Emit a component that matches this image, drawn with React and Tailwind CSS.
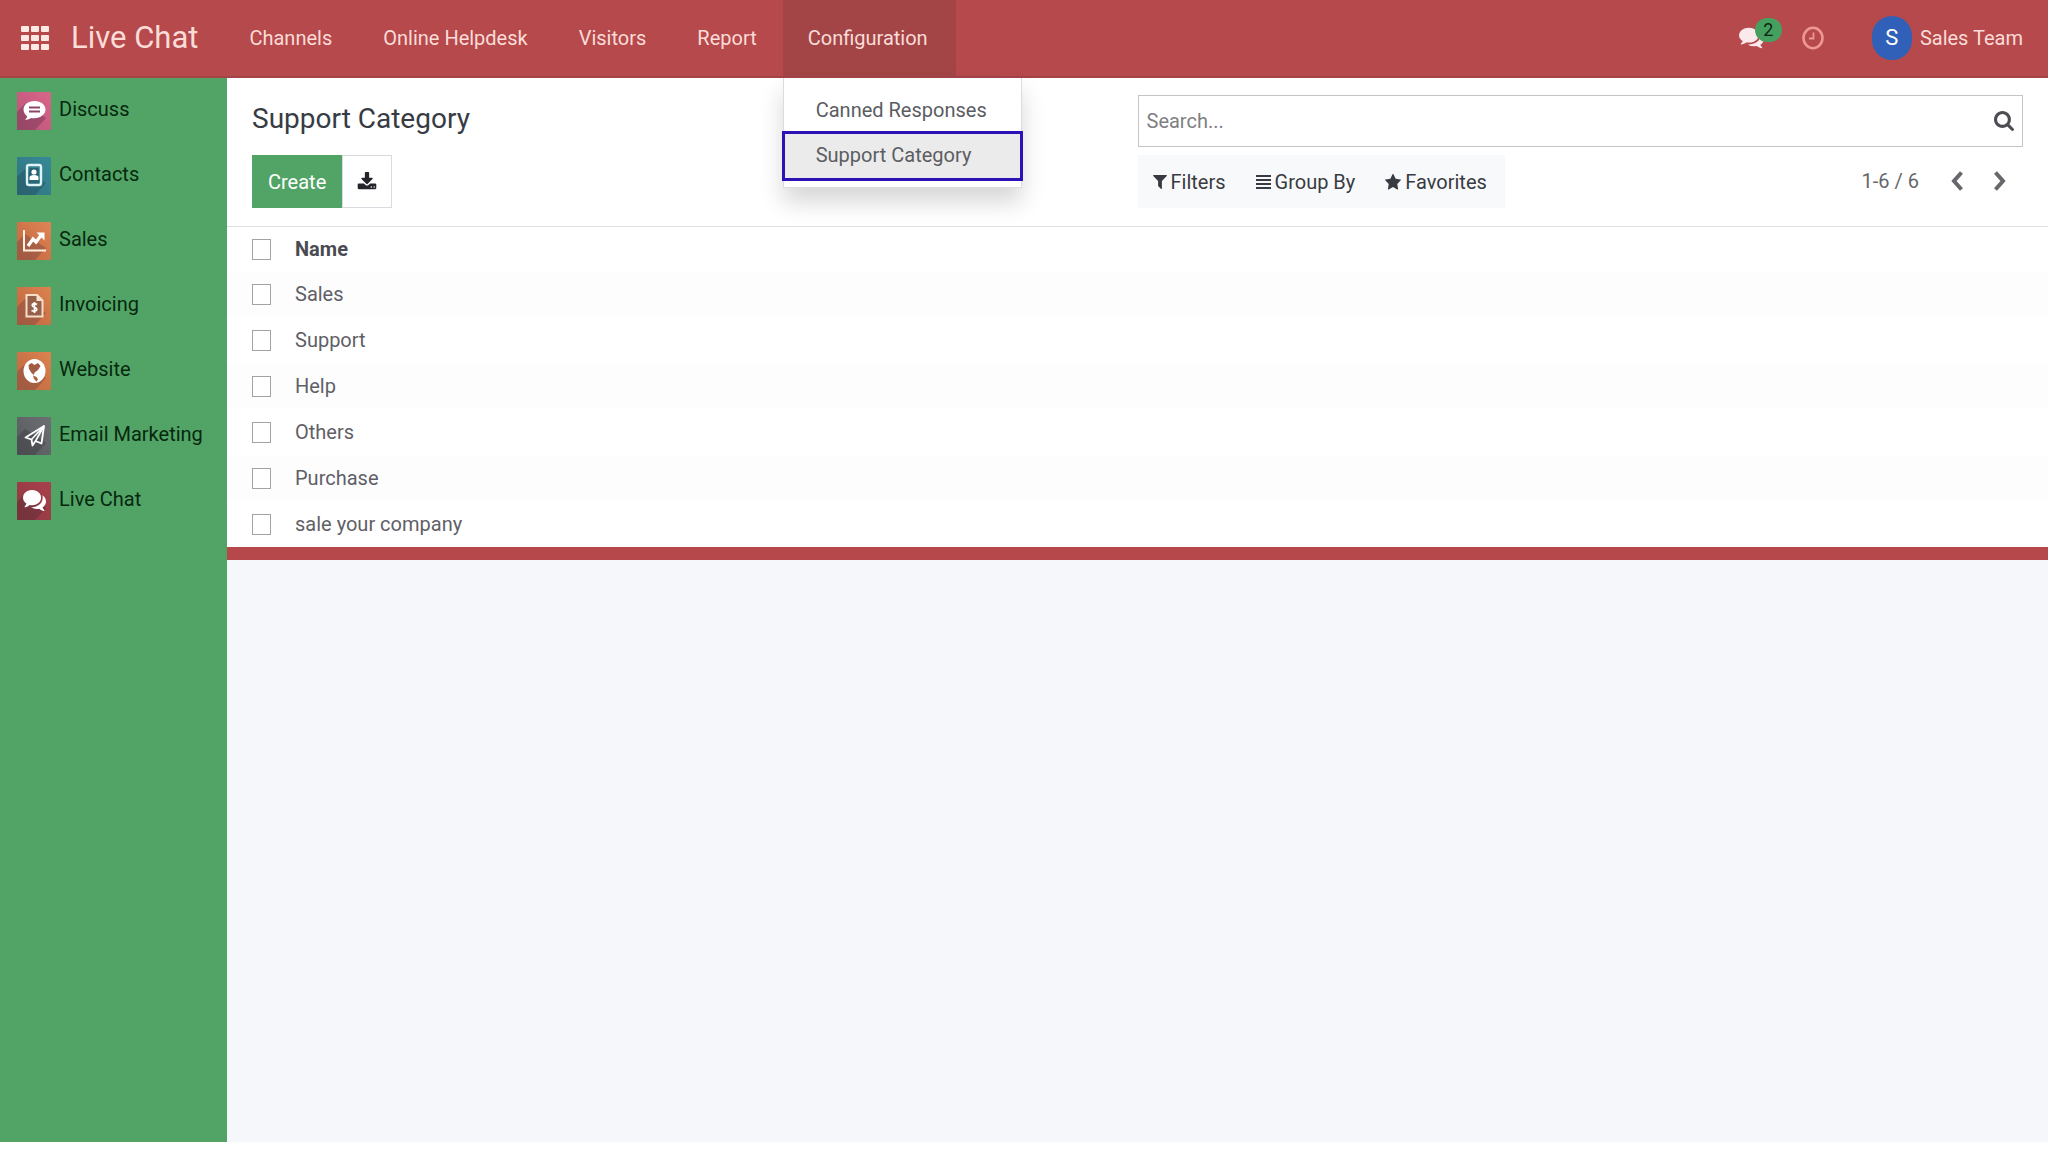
const PATHS = {
  download:
    "M1344 1344q0-26-19-45t-45-19-45 19-19 45 19 45 45 19 45-19 19-45zm256 0q0-26-19-45t-45-19-45 19-19 45 19 45 45 19 45-19 19-45zm128-224v320q0 40-28 68t-68 28h-1472q-40 0-68-28t-28-68v-320q0-40 28-68t68-28h465l135 136q58 56 136 56t136-56l136-136h464q40 0 68 28t28 68zm-325-569q17 41-14 70l-448 448q-18 19-45 19t-45-19l-448-448q-31-29-14-70 17-39 59-39h256v-448q0-26 19-45t45-19h256q26 0 45 19t19 45v448h256q42 0 59 39z",
  search:
    "M1216 832q0-185-131.5-316.5t-316.5-131.5-316.5 131.5-131.5 316.5 131.5 316.5 316.5 131.5 316.5-131.5 131.5-316.5zm512 832q0 52-38 90t-90 38q-54 0-90-38l-343-342q-179 124-399 124-143 0-273.5-55.5t-225-150-150-225-55.5-273.5 55.5-273.5 150-225 225-150 273.5-55.5 273.5 55.5 225 150 150 225 55.5 273.5q0 220-124 399l343 343q37 37 37 90z",
  filter:
    "M1595 295q17 41-14 70l-493 493v742q0 42-39 59-13 5-25 5-27 0-45-19l-256-256q-19-19-19-45v-486l-493-493q-31-29-14-70 17-39 59-39h1280q42 0 59 39z",
  star: "M1728 647q0 22-26 48l-363 354 86 500q1 7 1 20 0 21-10.5 35.5t-30.5 14.5q-19 0-40-12l-449-236-449 236q-22 12-40 12-21 0-31.5-14.5t-10.5-35.5q0-6 2-20l86-500-364-354q-25-27-25-48 0-37 56-46l502-73 225-455q19-41 49-41t49 41l225 455 502 73q56 9 56 46z",
  comments:
    "M1408 768q0 139-94 257t-256.5 186.5-353.5 68.5q-86 0-176-16-124 88-278 128-36 9-86 16h-3q-11 0-20.5-8t-11.5-21q-1-3-1-6.5t.5-6.5 2-6l2.5-5 3.5-5.5 4-5 4.5-5 4-4.5q5-6 23-25t26-29.5 22.5-29 25-38.5 20.5-44q-124-72-195-177t-71-224q0-139 94-257t256.5-186.5 353.5-68.5 353.5 68.5 256.5 186.5 94 257zm384 256q0 120-71 224.5t-195 176.5q10 24 20.5 44t25 38.5 22.5 29 26 29.5 23 25q1 1 4 4.5t4.5 5 4 5 3.5 5.5l2.5 5 2 6 .5 6.5-1 6.5q-3 14-13 22t-22 7q-50-7-86-16-154-40-278-128-90 16-176 16-271 0-472-132 58 4 88 4 161 0 309-45t264-129q125-92 192-212t67-254q0-77-23-152 129 71 204 178t75 230z",
};

function Glyph({ name, box = "0 0 1792 1792", className }) {
  return (
    <svg viewBox={box} preserveAspectRatio="none" fill="currentColor" className={className} aria-hidden="true">
      <path d={PATHS[name]} />
    </svg>
  );
}

function AppsGrid() {
  return (
    <svg viewBox="0 0 28 24" className="h-6 w-7" fill="currentColor" aria-hidden="true">
      {[0, 10, 20].map((x) =>
        [0, 9, 18].map((y) => <rect key={`${x}-${y}`} x={x} y={y} width="8" height="6" rx="1" />)
      )}
    </svg>
  );
}

function Chevron({ right }) {
  return (
    <svg viewBox="0 0 14 20" className="h-5 w-3.5" fill="none" stroke="currentColor" strokeWidth="4" aria-hidden="true">
      <path d={right ? "M2.5 1.5L10 10L2.5 18.5" : "M11.500 1.5L4 10L11.500 18.5"} />
    </svg>
  );
}

function Tile({ from, to, shade, children }) {
  return (
    <svg viewBox="0 0 34 38" className="h-[38px] w-[34px] shrink-0" aria-hidden="true">
      <defs>
        <linearGradient id={`tile-${from}`} x1="0" y1="1" x2="1" y2="0">
          <stop offset="0" stopColor={`#${from}`} />
          <stop offset="1" stopColor={`#${to}`} />
        </linearGradient>
      </defs>
      <rect width="34" height="38" rx="1" fill={`url(#tile-${from})`} />
      <path d="M8 12L0 20V38H18L29 26Z" fill={shade} opacity="0.55" />
      {children}
    </svg>
  );
}

const APPS = [
  {
    label: "Discuss",
    icon: (
      <Tile from="b85478" to="d9668a" shade="#7d3d5a">
        <path
          d="M17.500 9C11 9 6.500 12.600 6.500 17.600C6.500 20.500 8 22.800 10.200 24.200C10 25.800 9 27 7.800 27.800C10.500 27.800 12.700 26.900 14.200 25.900C22 27.200 28.500 23.200 28.500 17.600C28.500 12.600 24 9 17.500 9Z"
          fill="#fff"
        />
        <path d="M12 15.500H23M12 19.500H23" stroke="#8d4766" strokeWidth="1.800" />
      </Tile>
    ),
  },
  {
    label: "Contacts",
    icon: (
      <Tile from="31717f" to="358a98" shade="#225866">
        <rect x="10" y="8" width="14" height="20" rx="2" fill="none" stroke="#dff3f6" strokeWidth="2.400" />
        <rect x="12.500" y="11" width="9" height="12" fill="#265f70" />
        <circle cx="17" cy="15" r="2.600" fill="#fff" />
        <path d="M12.500 23V20.500Q12.500 18 17 18Q21.500 18 21.500 20.500V23Z" fill="#fff" />
      </Tile>
    ),
  },
  {
    label: "Sales",
    icon: (
      <Tile from="c0643f" to="df8556" shade="#8b5044">
        <path d="M7 8V28.500H29" fill="none" stroke="#fff0dc" strokeWidth="2" />
        <path d="M11 24L16 17L19 20L24 13.500" fill="none" stroke="#fff" strokeWidth="3.200" />
        <path d="M19.500 10.500H27.500V18.500Z" fill="#fff" />
      </Tile>
    ),
  },
  {
    label: "Invoicing",
    icon: (
      <Tile from="bd643e" to="dc8350" shade="#8b5044">
        <path d="M9.500 8H20L25.500 13.500V29.500H9.500Z" fill="#96604a" stroke="#f7ddc6" strokeWidth="2" />
        <path d="M19.500 7V14H26.500Z" fill="#f7ddc6" />
        <path
          d="M20 17.500Q17.500 15.800 15.500 17.300Q14.500 19.300 17.500 20.200Q20.500 21.300 19.500 23.300Q17.500 25 14.500 23.500M17.500 15V26"
          fill="none"
          stroke="#fff"
          strokeWidth="1.700"
        />
      </Tile>
    ),
  },
  {
    label: "Website",
    icon: (
      <Tile from="bd653e" to="dc8350" shade="#8b5044">
        <ellipse cx="17.500" cy="19" rx="11" ry="12" fill="#fff" />
        <path
          d="M11.500 13L14.500 11L17.500 13L21 11L23.500 14L21 18L17.500 20.500L17 23L14.500 21L12 17Z"
          fill="#a15c42"
        />
        <path d="M16 23.500L19.500 25L21 27.500L19.500 29.500L17 27Z" fill="#b0603f" />
      </Tile>
    ),
  },
  {
    label: "Email Marketing",
    icon: (
      <Tile from="56585c" to="6c7073" shade="#434449">
        <path
          d="M8.500 20.500L27 9L24.500 26.500L18.500 24L15.500 28.500L14.500 22.500Z"
          fill="none"
          stroke="#fff"
          strokeWidth="1.800"
          strokeLinejoin="round"
        />
        <path d="M14.500 22.500L27 9L18.500 24" fill="none" stroke="#fff" strokeWidth="1.600" />
      </Tile>
    ),
  },
  {
    label: "Live Chat",
    icon: (
      <Tile from="8f3740" to="a8424c" shade="#602f38">
        <svg x="6" y="8" width="23" height="21" viewBox="0 256 1792 1408" preserveAspectRatio="none">
          <path d={PATHS.comments} fill="#fff" />
        </svg>
      </Tile>
    ),
  },
];

const NAV = ["Channels", "Online Helpdesk", "Visitors", "Report"];
const ROWS = ["Sales", "Support", "Help", "Others", "Purchase", "sale your company"];

function Check({ label }) {
  return (
    <input
      type="checkbox"
      aria-label={label}
      className="block h-[21px] w-[19px] appearance-none border border-[#a3a3a6] bg-white"
    />
  );
}

function Header() {
  return (
    <header className="flex h-[78px] items-stretch border-b-2 border-[#a34447] bg-[#b6494b] text-xl text-[#fbdcd8]">
      <button type="button" aria-label="Apps" className="pl-[21px] text-[#fdeae4]">
        <AppsGrid />
      </button>
      <a href="#home" className="flex items-center pr-[26px] pl-[22px] text-[31px]">
        Live Chat
      </a>
      <nav className="flex items-stretch gap-px">
        {NAV.map((item) => (
          <a key={item} href="#nav" className="flex items-center px-[25px]">
            {item}
          </a>
        ))}
        <div className="relative flex">
          <button type="button" aria-expanded="true" className="bg-[#a34547] pr-7 pl-[25px]">
            Configuration
          </button>
          <div className="absolute top-[78px] left-0 z-10 w-[239px] border border-t-0 border-[#dcdcde] bg-white pt-[11px] pb-1.5 text-[#5b5d62] shadow-[0_14px_22px_rgba(0,0,0,0.16)]">
            <a href="#canned" className="flex h-[42px] items-center px-8">
              Canned Responses
            </a>
            <a
              href="#category"
              className="-mx-0.5 flex h-[50px] items-center border-[3px] border-[#2b12b4] bg-[#ebebeb] px-[31px] pb-0.5"
            >
              Support Category
            </a>
          </div>
        </div>
      </nav>
      <div className="ml-auto flex items-center pr-[25px]">
        <button type="button" aria-label="Messages, 2 unread" className="relative">
          <Glyph name="comments" box="0 128 1792 1664" className="h-6 w-[25px] text-[#fbe9ec]" />
          <span className="absolute -top-2 left-4 flex h-6 w-[27px] items-center justify-center rounded-full bg-[#45a060] text-lg text-[#0c2412]">
            2
          </span>
        </button>
        <button type="button" aria-label="Activities" className="ml-[38px] text-[#ee9794]">
          <svg viewBox="0 0 22 24" className="h-6 w-[22px]" fill="none" stroke="currentColor" aria-hidden="true">
            <ellipse cx="11" cy="12" rx="9.500" ry="10.200" strokeWidth="2.600" />
            <path d="M11.500 6.500V12.500H7" strokeWidth="1.800" />
          </svg>
        </button>
        <button type="button" className="ml-12 flex items-center gap-2">
          <span className="flex h-11 w-10 items-center justify-center rounded-full bg-[#3060b8] text-[22px] text-white">
            S
          </span>
          Sales Team
        </button>
      </div>
    </header>
  );
}

function ControlPanel() {
  return (
    <section className="grid grid-cols-2 border-b border-[#dddfe3] pt-[17px] pb-[18px]">
      <div className="pl-[25px]">
        <h1 className="flex h-12 items-center text-[28px] text-[#373b43]">Support Category</h1>
        <div className="mt-3 flex h-[53px]">
          <button type="button" className="bg-[#52a466] px-4 text-white">
            Create
          </button>
          <button
            type="button"
            aria-label="Export"
            className="flex w-[50px] items-center justify-center border border-[#dadbe0] text-[#23252a]"
          >
            <Glyph name="download" className="h-5 w-5" />
          </button>
        </div>
      </div>
      <div className="pr-[25px]">
        <div className="flex h-[52px] items-center border border-[#c4c4c8] pr-2 pl-2">
          <input
            type="text"
            aria-label="Search"
            placeholder="Search..."
            className="min-w-0 flex-1 outline-none placeholder:text-[#808083]"
          />
          <button type="button" aria-label="Run search" className="text-[#4c4d52]">
            <Glyph name="search" box="64 128 1664 1664" className="h-5 w-5" />
          </button>
        </div>
        <div className="mt-2 flex items-center justify-between">
          <div className="flex h-[53px] items-center bg-[#f8f9fb] text-[#383b41]">
            <button type="button" className="flex items-center gap-1 pr-4 pl-[15px]">
              <Glyph name="filter" box="190 256 1412 1412" className="h-3.5 w-3.5" />
              Filters
            </button>
            <button type="button" className="flex items-center gap-1 pr-4 pl-3.5">
              <svg viewBox="0 0 15 14" className="h-3.5 w-[15px]" fill="currentColor" aria-hidden="true">
                <path d="M0 0H15V2H0ZM0 4H15V6H0ZM0 8H15V10H0ZM0 12H15V14H0Z" />
              </svg>
              Group By
            </button>
            <button type="button" className="flex items-center gap-1 pr-[18px] pl-3.5">
              <Glyph name="star" box="64 60 1664 1600" className="h-4 w-4" />
              Favorites
            </button>
          </div>
          <div className="flex items-center pr-4 pb-0.5 text-[#66676b]">
            <span>1-6 / 6</span>
            <button type="button" aria-label="Previous page" className="ml-[31px]">
              <Chevron />
            </button>
            <button type="button" aria-label="Next page" className="ml-[29px]">
              <Chevron right />
            </button>
          </div>
        </div>
      </div>
    </section>
  );
}

function CategoryTable() {
  return (
    <table className="w-full border-collapse text-left text-[#5f6066]">
      <thead>
        <tr className="h-11">
          <th className="w-[68px] py-0 pl-[25px]">
            <Check label="Select all" />
          </th>
          <th className="p-0 font-bold text-[#4a4b50]">Name</th>
        </tr>
      </thead>
      <tbody>
        {ROWS.map((name) => (
          <tr key={name} className="h-[46px] odd:bg-[#fdfdfe]">
            <td className="py-0 pl-[25px]">
              <Check label={`Select ${name}`} />
            </td>
            <td className="p-0">{name}</td>
          </tr>
        ))}
      </tbody>
    </table>
  );
}

export default function App() {
  return (
    <div className="h-screen bg-white pb-[10px] font-['Roboto',sans-serif] text-xl">
      <div className="flex h-full flex-col">
        <Header />
        <div className="flex min-h-0 flex-1">
          <aside className="w-[227px] shrink-0 bg-[#52a466] pt-3.5 text-[#06280f]">
            <ul>
              {APPS.map(({ label, icon }) => (
                <li key={label} className="h-[65px]">
                  <a href="#app" className="flex gap-2 pl-[17px] leading-[34px] whitespace-nowrap">
                    {icon}
                    {label}
                  </a>
                </li>
              ))}
            </ul>
          </aside>
          <main className="min-w-0 flex-1 bg-[#f6f7fa]">
            <div className="border-b-[13px] border-[#b6484b] bg-white">
              <ControlPanel />
              <CategoryTable />
            </div>
          </main>
        </div>
      </div>
    </div>
  );
}
